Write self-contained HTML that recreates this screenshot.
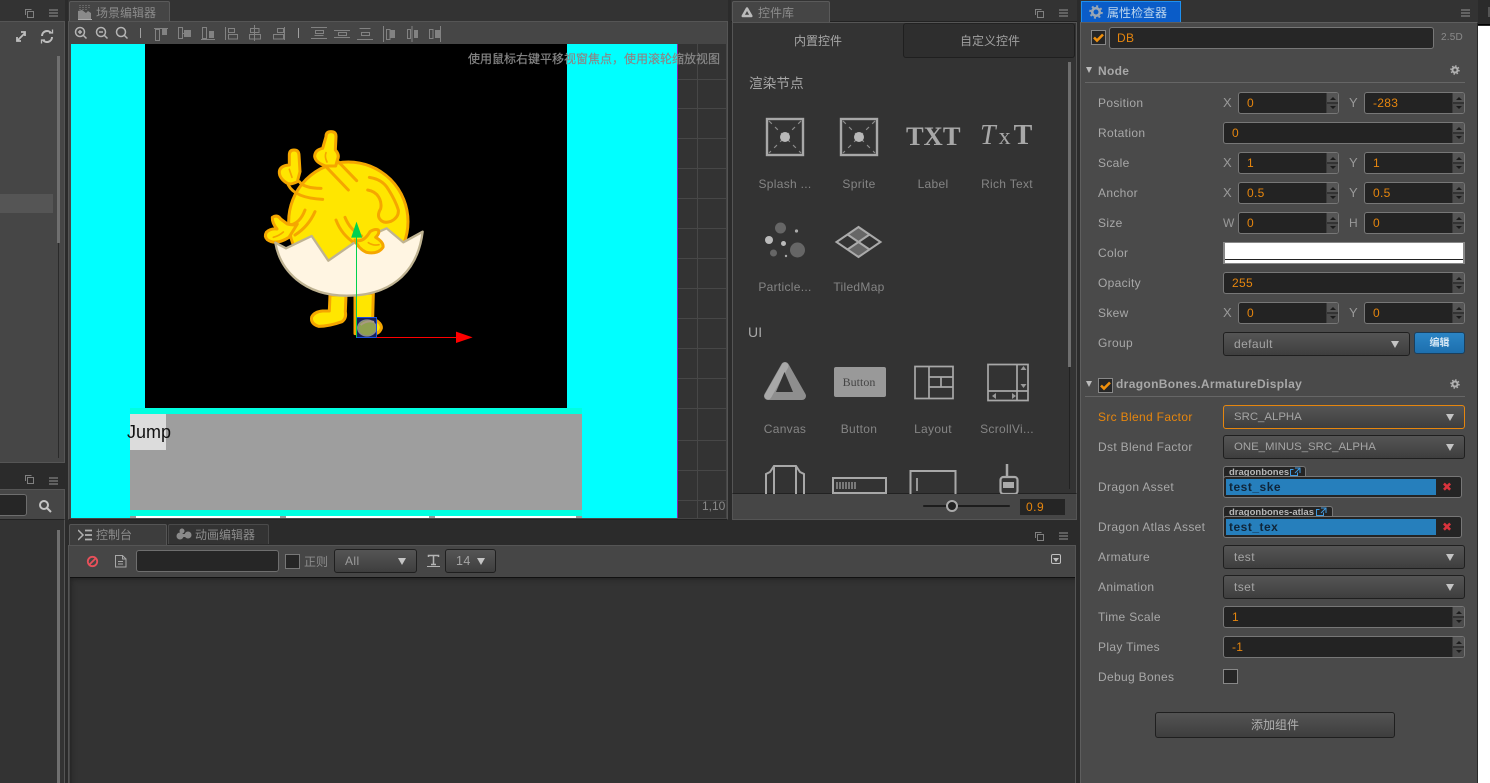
<!DOCTYPE html>
<html><head><meta charset="utf-8"><style>
*{box-sizing:border-box}
html,body{margin:0;padding:0}
body{width:1490px;height:783px;overflow:hidden;background:#2b2b2b;position:relative;font:12px/16px "Liberation Sans","Noto Sans CJK SC",sans-serif;color:#a0a0a0}
div,span,svg{position:absolute}
.t{white-space:nowrap;letter-spacing:.4px}
.c{text-align:center;letter-spacing:.3px;white-space:nowrap;color:#858585;width:90px}
.l{left:17px;white-space:nowrap;letter-spacing:.33px;color:#a8a8a8;line-height:16px}
.ax{white-space:nowrap;color:#999;font-size:13px;line-height:16px}
.in{height:22px;background:#232323;border:1px solid #777;border-radius:3px;color:#e6860e;line-height:20px;padding-left:8px;letter-spacing:.3px;overflow:hidden}
.in b{position:absolute;right:0;top:0;bottom:0;width:12px;background:linear-gradient(#555 0,#555 9px,#333 9px,#333 11px,#4b4b4b 11px);border-left:1px solid #3a3a3a}
.in b:before,.in b:after{content:"";position:absolute;left:3px;border-left:3px solid transparent;border-right:3px solid transparent}
.in b:before{top:4px;border-bottom:3.5px solid #1c1c1c}
.in b:after{top:13px;border-top:3.5px solid #1c1c1c}
.sel{height:24px;background:linear-gradient(#555,#3e3e3e);border:1px solid #1f1f1f;border-radius:3px;color:#a4a4a4;line-height:22px;padding-left:10px;letter-spacing:.4px}
.sel:after{content:"";position:absolute;right:10px;top:8px;border-left:4.5px solid transparent;border-right:4.5px solid transparent;border-top:7px solid #c4c4c4}
.asset{left:142px;height:22px;width:239px;background:#242424;border:1px solid #777;border-radius:3px}
.asset i{position:absolute;left:2px;top:2px;height:16px;width:210px;background:#267fbc;color:#10263a;font:bold 12px/17px "Liberation Sans",sans-serif;font-style:normal;letter-spacing:.5px;padding-left:3px}
.asset u{position:absolute;left:218px;top:1px;color:#d8333c;font:bold 12px/18px "DejaVu Sans",sans-serif;text-decoration:none}
.tag{left:142px;height:12px;background:#242424;border:1px solid #777;border-bottom:0;border-radius:3px 3px 0 0;color:#b8b8b8;font:bold 9.5px/11px "Liberation Sans",sans-serif;padding-left:5px;white-space:nowrap}
.tag svg{top:0}
</style></head><body>

<!-- left panels -->
<div style="left:0;top:0;width:65px;height:21px;background:#333"></div>
<div style="left:0;top:21px;width:65px;height:442px;background:#464646;border-right:1px solid #555;border-top:1px solid #555;border-bottom:1px solid #555"></div>
<div style="left:0;top:194px;width:53px;height:19px;background:#555"></div>
<div style="left:57px;top:56px;width:3px;height:187px;background:#6f6f6f"></div>
<div style="left:58px;top:243px;width:1px;height:215px;background:#2a2a2a"></div>
<svg style="left:0;top:0" width="65" height="530" fill="none" stroke="#808080">
<rect x="27.500" y="11.500" width="6" height="6"/><path d="M25.500 15V9.500h6"/><path d="M49 10h9M49 13h9M49 16h9" stroke-width="1.300"/>
<path d="M17 41l8-8M17 37v4h4M21 32h4v4" stroke="#bdbdbd" stroke-width="1.800"/>
<path d="M42 36a5 5 0 0 1 9-3M52 37a5 5 0 0 1-9 3" stroke="#bdbdbd" stroke-width="2"/><path d="M49 33h3.500v-3.500M45 40h-3.500v3.500" stroke="#bdbdbd" stroke-width="1.300"/>
<rect x="27.500" y="477.500" width="6" height="6"/><path d="M25.500 481v-5.500h6"/><path d="M49 478h9M49 481h9M49 484h9" stroke-width="1.300"/>
</svg>
<div style="left:0;top:489px;width:65px;height:30px;background:#464646;border-top:1px solid #555;border-right:1px solid #555"></div>
<div style="left:-4px;top:494px;width:31px;height:22px;background:#262626;border:1px solid #6e6e6e;border-radius:3px"></div>
<svg style="left:38px;top:499px" width="14" height="14" fill="none" stroke="#c4c4c4" stroke-width="2"><circle cx="6" cy="6" r="4"/><path d="M9 9l4 4"/></svg>
<div style="left:0;top:519px;width:65px;height:264px;background:#333;border-right:1px solid #555;border-top:1px solid #222"></div>
<div style="left:57px;top:530px;width:3px;height:253px;background:#6f6f6f"></div>

<!-- scene panel -->
<div style="left:68px;top:0;width:660px;height:22px;background:#333;border-bottom:1px solid #222"></div>
<div style="left:69px;top:1px;width:101px;height:21px;background:#454545;border:1px solid #5a5a5a;border-bottom:0;border-radius:2px 2px 0 0"></div>
<svg style="left:78px;top:4px" width="15" height="16"><path d="M0 7l4-1 4 3 2-2 3 2v6H0z" fill="#8a8a8a"/><path d="M0 15.500h14" stroke="#aaa"/><path d="M1 1.500h12M1 3.500h12M1 5.500h8" stroke="#666" stroke-dasharray="2 1"/></svg>
<div class="t" style="left:96px;top:5px;color:#8c8c8c;letter-spacing:0">场景编辑器</div>
<div style="left:68px;top:21px;width:660px;height:499px;background:#464646;border:1px solid #555;border-bottom-color:#222"></div>
<svg style="left:70px;top:22px" width="400" height="22" fill="none" stroke="#828282">
<g stroke="#b4b4b4" stroke-width="1.500"><circle cx="10" cy="10" r="4.500"/><path d="M13.500 13.500l3 3M8 10h4M10 8v4"/><circle cx="31" cy="10" r="4.500"/><path d="M34.500 13.500l3 3M29 10h4"/><circle cx="51" cy="10" r="4.500"/><path d="M54.500 13.500l3 3"/></g>
<path d="M70.500 6v10M228.500 6v10" stroke="#a0a0a0"/>
<path d="M84 6.500h14M85.500 7.500h4v11h-4z"/><rect x="92" y="7" width="5" height="6" fill="#828282" stroke="none"/>
<path d="M108.500 5.500h4v11h-4zM112.500 11.500h2"/><rect x="114" y="8" width="7" height="7" fill="#828282" stroke="none"/>
<path d="M131 17.500h14M132.500 5.500h4v11h-4z"/><rect x="139" y="9" width="5" height="7" fill="#828282" stroke="none"/>
<path d="M155.500 5v13M158.500 6.500h6v4h-6zM158.500 12.500h9v4.500h-9z"/>
<path d="M184.500 3v16M180.500 6.500h8.500v4h-8.500zM179.500 12.500h11v4.500h-11z"/>
<path d="M214.500 5v13M207.500 6.500h6v4h-6zM203.500 12.500h10v4.500h-10z"/>
<path d="M241 5.500h16M245.500 8.500h8v3h-8zM241 16.500h16M244.500 13.500h9"/>
<path d="M264 8.500h16M264 15.500h16M268.500 10.500h8v3h-8z"/>
<path d="M287 17.500h16M289.500 6.500h11M291.500 10.500h8v3h-8z"/>
<path d="M313.500 4v16M316.500 7.500h3.500v10h-3.500z"/><rect x="320" y="8" width="5" height="8" fill="#828282" stroke="none"/>
<path d="M342 4v16M337.500 7.500h3v9h-3z"/><rect x="344" y="8" width="4" height="8" fill="#828282" stroke="none"/>
<path d="M370.500 4v16M359.500 7.500h3.500v9h-3.500z"/><rect x="365" y="8" width="5" height="8" fill="#828282" stroke="none"/>
</svg>

<!-- viewport -->
<div style="left:71px;top:44px;width:655px;height:474px;background:#333;overflow:hidden">
<svg style="left:607px;top:0" width="48" height="474" stroke="#474747"><path d="M19.500 0v474"/><path d="M0 35.500h48M0 64.500h48M0 94.500h48M0 124.500h48M0 154.500h48M0 184.500h48M0 214.500h48M0 244.500h48M0 274.500h48M0 304.500h48M0 334.500h48M0 364.500h48M0 396.500h48M0 426.500h48M0 456.500h48"/></svg>
<div style="left:0;top:0;width:606px;height:474px;background:#0ff"></div>
<div style="left:606px;top:0;width:1px;height:474px;background:#8a1fb0"></div>
<div style="left:74px;top:0;width:422px;height:364px;background:#000"></div>
<div style="left:59px;top:364px;width:452px;height:108px;background:#00ffe0"></div>
<div style="left:59px;top:370px;width:452px;height:96px;background:#9e9e9e"></div>
<div style="left:59px;top:370px;width:36px;height:36px;background:#dcdcdc"></div>
<div style="left:59px;top:472px;width:452px;height:2px;background:#fff"></div>
<div style="left:59px;top:472px;width:6px;height:2px;background:#999"></div>
<div style="left:209px;top:472px;width:6px;height:2px;background:#999"></div>
<div style="left:358px;top:472px;width:6px;height:2px;background:#999"></div>
<div style="left:505px;top:472px;width:6px;height:2px;background:#999"></div>
<div style="left:56px;top:378px;color:#111;font:18px/20px 'Liberation Sans',sans-serif">Jump</div>
<div class="t" style="left:631px;top:454px;color:#8a8a8a;letter-spacing:0">1,10</div>
</div>
<div style="left:468px;top:51px;width:253px;white-space:nowrap;color:#888;font-size:12px;line-height:16px;-webkit-text-stroke:.2px #888">使用鼠标右键平移视窗焦点&#65292;使用滚轮缩放视图</div>

<!-- chick -->
<svg style="left:240px;top:110px" width="250" height="240" viewBox="0 0 750 720">
<g stroke="#f5a600" stroke-width="9" stroke-linejoin="round" stroke-linecap="round">
<path d="M270 555h48l-2 50q4 20-10 30q-40 14-70 14q-25-8-21-28q8-16 33-18h20z" fill="#ffe600"/>
<path d="M345 550h55l-2 75q28 14 26 30q-6 16-20 16h-59z" fill="#ffe600"/>
<circle cx="325" cy="335" r="179" fill="#ffe600"/>
<g fill="none" stroke-width="9">
<path d="M388 202q40 6 57 36q22 35 30 62q2 22-22 34q-22 8-33-6-10-12 2-32 4-18-6-35-10-17-33-21"/>
<path d="M258 170L325 240M295 155L350 212"/>
<path d="M145 225Q165 264 248 268M178 215q15 20 65 20"/>
<path d="M150 345Q180 340 195 300M165 375Q205 350 225 305"/>
<path d="M288 330Q305 375 345 400M315 322Q330 360 365 378"/>
</g>
<path d="M258 80q0-15 15-15q15 0 15 15l-2 40q14 15 6 30l-5 18h-30q-30-10-33-28q0-20 24-25z" fill="#ffe600"/>
<path d="M148 135q0-15 14-15q14 0 15 15l3 50l-8 30q-20 10-30 5q-25-15-24-35q2-18 30-20z" fill="#ffe600"/>
<path d="M97 322q15-10 25 5l20 15q20 5 30 0l-25 40q-40 25-65 7q-10-10-3-22q12-12 32-10q-15-18-14-35z" fill="#ffe600"/>
<g fill="none" stroke-width="5"><path d="M258 128q-5 12 3 28M148 178l8 24M100 382q18-5 30-16"/></g>
</g>
<path d="M548 365C535 470 470 557 320 557C190 557 120 480 106 398L138 415 215 378 265 452 340 400 440 355 490 397Z" fill="#fff5e2" stroke="#bfb392" stroke-width="7" stroke-linejoin="round"/>
<g stroke="#f5a600" stroke-width="9" stroke-linejoin="round" stroke-linecap="round">
<path d="M345 390q25 10 45-25q15-10 25-5q5 10-8 22q25 15 22 30q-15 22-50 15q-25-12-34-37z" fill="#ffe600"/>
<path d="M385 398q15 10 32 6" fill="none" stroke-width="5"/>
</g>
<rect x="349.500" y="622.500" width="60" height="60" fill="#14205a"/>
<ellipse cx="381" cy="654" rx="28" ry="24" fill="#8fa050" stroke="#8a8a8a" stroke-width="4"/>
<path d="M362 645q18-15 40-9" stroke="#a89a80" stroke-width="6" fill="none"/>
<rect x="349.500" y="622.500" width="60" height="60" fill="none" stroke="#1c50e0" stroke-width="3"/>
<path d="M349.500 382v300" stroke="#00d24f" stroke-width="3"/>
<path d="M349.500 335l-16 48h33z" fill="#00d24f"/>
<path d="M410 682.500h240" stroke="#ff0000" stroke-width="3"/>
<path d="M648 665v34l50-17z" fill="#f00"/>
</svg>

<!-- library panel -->
<div style="left:731px;top:0;width:346px;height:22px;background:#333;border-bottom:1px solid #222"></div>
<div style="left:732px;top:1px;width:98px;height:21px;background:#454545;border:1px solid #5a5a5a;border-bottom:0;border-radius:2px 2px 0 0"></div>
<svg style="left:741px;top:6px" width="13" height="12" fill="none" stroke="#bbb" stroke-width="2.500"><path d="M6 2.500L1.800 10h8.500z" stroke-linejoin="round"/></svg>
<div class="t" style="left:758px;top:5px;color:#8c8c8c;letter-spacing:0">控件库</div>
<svg style="left:1030px;top:0" width="48" height="22" fill="none" stroke="#808080"><rect x="7.500" y="11.500" width="6" height="6"/><path d="M5.500 15V9.500h6"/><path d="M29 10h9M29 13h9M29 16h9" stroke-width="1.300"/></svg>
<div style="left:732px;top:22px;width:345px;height:472px;background:#333;border:1px solid #555;border-bottom:1px solid #222"></div>
<div style="left:903px;top:23px;width:172px;height:35px;background:#2e2e2e;border:1px solid #1f1f1f;border-top:1px solid #222;border-radius:3px"></div>
<div class="t" style="left:794px;top:33px;color:#a8a8a8;letter-spacing:0">内置控件</div>
<div class="t" style="left:960px;top:33px;color:#a0a0a0;letter-spacing:0">自定义控件</div>
<div class="t" style="left:749px;top:76px;color:#a8a8a8;font-size:13.500px;letter-spacing:.2px">渲染节点</div>
<div class="t" style="left:748px;top:324px;color:#a8a8a8;font-size:14px;letter-spacing:.2px">UI</div>
<div style="left:1068px;top:62px;width:3px;height:305px;background:#6f6f6f"></div>
<div style="left:1069px;top:367px;width:1px;height:122px;background:#222"></div>

<svg style="left:740px;top:100px" width="320" height="394" fill="none">
<path d="M29 21L61 53M61 21L29 53M103 21L135 53M135 21L103 53" stroke="#8c8c8c" stroke-dasharray="4 4.500" stroke-width="1.200"/>
<rect x="27" y="19" width="36" height="36" stroke="#a8a8a8" stroke-width="2.400"/>
<rect x="101" y="19" width="36" height="36" stroke="#a8a8a8" stroke-width="2.400"/>
<circle cx="45" cy="37" r="5" fill="#b8b8b8"/><circle cx="119" cy="37" r="5" fill="#b8b8b8"/>
<circle cx="40.500" cy="128" r="5.500" fill="#666"/><circle cx="29" cy="140" r="4" fill="#bbb"/><circle cx="43.500" cy="143.500" r="2.500" fill="#bbb"/><circle cx="56.500" cy="131" r="1.600" fill="#aaa"/><circle cx="57.500" cy="150" r="7.500" fill="#666"/><circle cx="33.500" cy="153" r="3.500" fill="#666"/><circle cx="46" cy="156" r="1.200" fill="#aaa"/>
<path d="M118.500 127l11 7.500-11 7.500-11-7.500zM118.500 142l11 7.500-11 7.500-11-7.500z" fill="#666"/>
<path d="M118.500 127l22 15-22 15-22-15zM107.500 134.500l22 15M129.500 134.500l-22 15" stroke="#aaa" stroke-width="2"/>
<path d="M45 266L28 296H62Z" fill="#8e8e8e" stroke="#8e8e8e" stroke-width="8" stroke-linejoin="round"/>
<path d="M45 266L28 296" stroke="#a8a8a8" stroke-width="7" stroke-linecap="round"/>
<path d="M44.500 272L36 292H53Z" fill="#333"/>
<rect x="94" y="267" width="52" height="30" rx="2" fill="#999"/>
<g stroke="#a8a8a8" stroke-width="1.700">
<path d="M175 266.500h38v32h-38zM189 266.500v32M189 277h24M189 287h24M201 277v10"/>
<path d="M248 264.500h40v36h-40zM277 264.500v36M248 291h40"/>
<path d="M26 394V374l4-2 4-6h22l4 6 4 2v20M34 366v28M56 366v28" stroke-width="2"/>
<path d="M93 378h53v15H93z" stroke-width="2"/>
<path d="M97 382v7M100 382v7M103 382v7M106 382v7M109 382v7M112 382v7M115 382v7" stroke-width="1.200"/>
<path d="M170.500 394v-23h45v23" stroke-width="2"/><path d="M177 378v13"/>
<path d="M267 364v14" stroke-width="2.500"/><rect x="260.500" y="377" width="17" height="17" rx="3" stroke-width="2.200"/>
</g>
<rect x="263" y="382" width="11" height="6" fill="#aaa"/>
</svg>
<svg style="left:1020px;top:364px" width="8" height="28" fill="#999"><path d="M.5 6l3-4 3 4zM.5 20l3 4 3-4z"/></svg>
<svg style="left:988px;top:390px" width="30" height="12" fill="#999"><path d="M8 3l-4 3 4 3zM24 3l4 3-4 3z"/></svg>

<div style="left:823px;top:374px;font:12px/16px 'Liberation Serif',serif;color:#444;width:72px;text-align:center">Button</div>
<div style="left:906px;top:122px;font:bold 26.500px/28px 'Liberation Serif',serif;color:#a8a8a8;white-space:nowrap">TXT</div>
<div style="left:980px;top:122px;font:28px/28px 'Liberation Serif',serif;color:#a8a8a8;white-space:nowrap;letter-spacing:3px"><em>T</em><span style="position:static;font-size:24px">x</span><b>T</b></div>

<div class="c" style="left:740px;top:176px">Splash ...</div>
<div class="c" style="left:814px;top:176px">Sprite</div>
<div class="c" style="left:888px;top:176px">Label</div>
<div class="c" style="left:962px;top:176px">Rich Text</div>
<div class="c" style="left:740px;top:279px">Particle...</div>
<div class="c" style="left:814px;top:279px">TiledMap</div>
<div class="c" style="left:740px;top:421px">Canvas</div>
<div class="c" style="left:814px;top:421px">Button</div>
<div class="c" style="left:888px;top:421px">Layout</div>
<div class="c" style="left:962px;top:421px">ScrollVi...</div>

<div style="left:732px;top:494px;width:345px;height:26px;background:#464646;border:1px solid #555;border-top:0"></div>
<div style="left:923px;top:505px;width:87px;height:2px;background:#1d1d1d;border-radius:1px"></div>
<div style="left:946px;top:500px;width:12px;height:12px;border-radius:50%;background:#222;border:2px solid #aaa"></div>
<div style="left:1020px;top:499px;width:45px;height:16px;background:#252525;color:#e6860e;line-height:16px;padding-left:6px;letter-spacing:.5px">0.9</div>

<!-- console -->
<div style="left:69px;top:524px;width:98px;height:21px;background:#3d3d3d;border:1px solid #555;border-bottom:0;border-radius:2px 2px 0 0"></div>
<div style="left:168px;top:524px;width:101px;height:20px;background:#333;border:1px solid #4a4a4a;border-bottom:0;border-radius:2px 2px 0 0"></div>
<svg style="left:78px;top:529px" width="15" height="12" fill="none" stroke="#b0b0b0" stroke-width="1.500"><path d="M0 1l5 5-5 5"/><path d="M7 1.500h7M7 6h7M7 10.500h7" stroke-width="1.700"/></svg>
<svg style="left:176px;top:528px" width="16" height="13" fill="#8a8a8a"><circle cx="4" cy="8" r="3.500"/><circle cx="12" cy="7" r="3.500"/><circle cx="6" cy="3" r="2.500"/><path d="M4 6h8v3H4z"/></svg>
<div class="t" style="left:96px;top:527px;color:#8c8c8c;letter-spacing:0">控制台</div>
<div class="t" style="left:195px;top:527px;color:#8c8c8c;letter-spacing:0">动画编辑器</div>
<svg style="left:1030px;top:525px" width="48" height="22" fill="none" stroke="#808080"><rect x="7.500" y="9.500" width="6" height="6"/><path d="M5.500 13V7.500h6"/><path d="M29 8h9M29 11h9M29 14h9" stroke-width="1.300"/></svg>
<div style="left:68px;top:545px;width:1008px;height:238px;background:#464646;border:1px solid #555;border-bottom:0"></div>
<div style="left:70px;top:577px;width:1005px;height:206px;background:#333;border-top:1px solid #111;box-shadow:inset 4px 4px 6px -3px #222"></div>
<svg style="left:86px;top:555px" width="13" height="13" fill="none" stroke="#e8505a" stroke-width="1.800"><circle cx="6.500" cy="6.500" r="4.700"/><path d="M3 10l7-7"/></svg>
<svg style="left:115px;top:555px" width="12" height="13" fill="none" stroke="#a8a8a8"><path d="M.5.500h7l3.500 3.500v8H.500zM7.500.500v3.500H11"/><path d="M3 6.500h5M3 9h5"/></svg>
<div style="left:136px;top:550px;width:143px;height:22px;background:#262626;border:1px solid #6e6e6e;border-radius:3px"></div>
<div style="left:285px;top:554px;width:15px;height:15px;background:#262626;border:1px solid #777"></div>
<div class="t" style="left:304px;top:554px;color:#8c8c8c;letter-spacing:0">正则</div>
<div class="sel" style="left:334px;top:549px;width:83px;color:#9c9c9c">All</div>
<svg style="left:427px;top:554px" width="13" height="14" fill="none" stroke="#b4b4b4"><path d="M1.500 3V1.500h10V3M6.500 1.500v9M4 10.500h5" stroke-width="1.500"/><path d="M0 12.500h13"/></svg>
<div class="sel" style="left:445px;top:549px;width:51px;font-size:12.500px">14</div>
<div style="left:1051px;top:554px;width:10px;height:10px;border:1px solid #c0c0c0;border-radius:2px"></div>
<div style="left:1053px;top:558px;border-left:3px solid transparent;border-right:3px solid transparent;border-top:4px solid #c0c0c0"></div>

<!-- inspector -->
<div style="left:1080px;top:0;width:400px;height:22px;background:#333"></div>
<div style="left:1478px;top:0;width:12px;height:25px;background:#2b2b2b;border-bottom:1px solid #000"></div>
<div style="left:1478px;top:26px;width:12px;height:757px;background:#fff"></div>
<div style="left:1488px;top:7px;width:2px;height:10px;background:#555"></div>
<div style="left:1081px;top:1px;width:100px;height:21px;background:#0a5cc8;border:1px solid #1e90f0;border-bottom:0"></div>
<svg style="left:1089px;top:5px" width="14" height="14" fill="none" stroke="#9aa6b4"><circle cx="7" cy="7" r="3.800" stroke-width="2.600"/><circle cx="7" cy="7" r="5.800" stroke-width="2" stroke-dasharray="2 2.550"/></svg>
<div class="t" style="left:1107px;top:5px;color:#bcd6ee;letter-spacing:0">属性检查器</div>
<svg style="left:1460px;top:0" width="16" height="22" fill="none" stroke="#808080" stroke-width="1.300"><path d="M1 10h9M1 13h9M1 16h9"/></svg>

<div style="left:1080px;top:22px;width:398px;height:761px;background:#4a4a4a;border:1px solid #5e5e5e;border-right:1px solid #2a2a2a;border-bottom:0">
<!-- inner coords: origin 1081,23 -->
<div style="left:10px;top:7px;width:15px;height:15px;background:#262626;border:1px solid #888"></div>
<svg style="left:11px;top:8px" width="13" height="13" fill="none" stroke="#f0900c" stroke-width="2.600"><path d="M2 6.500l3 3 6-6"/></svg>
<div style="left:28px;top:4px;width:325px;height:22px;background:#262626;border:1px solid #777;border-radius:3px;color:#e6860e;line-height:20px;padding-left:7px;letter-spacing:.3px">DB</div>
<div class="t" style="left:360px;top:7px;color:#8a8a8a;font-size:10px;letter-spacing:.2px">2.5D</div>

<div style="left:5px;top:44px;border-left:3.500px solid transparent;border-right:3.500px solid transparent;border-top:6px solid #bbb"></div>
<div class="t" style="left:17px;top:40px;font-weight:bold;color:#a8a8a8;letter-spacing:.3px">Node</div>
<svg style="left:369px;top:42px" width="10" height="10" fill="none" stroke="#b0b0b0"><circle cx="5" cy="5" r="2.500" stroke-width="2"/><circle cx="5" cy="5" r="4" stroke-width="1.500" stroke-dasharray="1.500 1.640"/></svg>
<div style="left:4px;top:59px;width:380px;height:1px;background:#666"></div>

<div class="l" style="top:72px">Position</div><div class="ax" style="left:142px;top:72px">X</div><div class="in" style="left:157px;top:69px;width:101px">0<b></b></div><div class="ax" style="left:268px;top:72px">Y</div><div class="in" style="left:283px;top:69px;width:101px">-283<b></b></div>
<div class="l" style="top:102px">Rotation</div><div class="in" style="left:142px;top:99px;width:242px">0<b></b></div>
<div class="l" style="top:132px">Scale</div><div class="ax" style="left:142px;top:132px">X</div><div class="in" style="left:157px;top:129px;width:101px">1<b></b></div><div class="ax" style="left:268px;top:132px">Y</div><div class="in" style="left:283px;top:129px;width:101px">1<b></b></div>
<div class="l" style="top:162px">Anchor</div><div class="ax" style="left:142px;top:162px">X</div><div class="in" style="left:157px;top:159px;width:101px">0.5<b></b></div><div class="ax" style="left:268px;top:162px">Y</div><div class="in" style="left:283px;top:159px;width:101px">0.5<b></b></div>
<div class="l" style="top:192px">Size</div><div class="ax" style="left:142px;top:192px;font-size:12px">W</div><div class="in" style="left:157px;top:189px;width:101px">0<b></b></div><div class="ax" style="left:268px;top:192px;font-size:12px">H</div><div class="in" style="left:283px;top:189px;width:101px">0<b></b></div>
<div class="l" style="top:222px">Color</div>
<div style="left:142px;top:219px;width:242px;height:22px;background:#fff;border:1px solid #888;border-width:1px 2px"></div>
<div style="left:144px;top:236px;width:238px;height:1px;background:#222"></div>
<div class="l" style="top:252px">Opacity</div><div class="in" style="left:142px;top:249px;width:242px">255<b></b></div>
<div class="l" style="top:282px">Skew</div><div class="ax" style="left:142px;top:282px">X</div><div class="in" style="left:157px;top:279px;width:101px">0<b></b></div><div class="ax" style="left:268px;top:282px">Y</div><div class="in" style="left:283px;top:279px;width:101px">0<b></b></div>
<div class="l" style="top:312px">Group</div><div class="sel" style="left:142px;top:309px;width:187px">default</div>
<div style="left:333px;top:309px;width:51px;height:22px;background:linear-gradient(#2b85c5,#1d6fae);border:1px solid #1b3f5c;border-radius:3px;color:#d4e6f4;text-align:center;font-size:10px;line-height:21px;font-weight:bold">编辑</div>

<div style="left:5px;top:358px;border-left:3.500px solid transparent;border-right:3.500px solid transparent;border-top:6px solid #bbb"></div>
<div style="left:17px;top:355px;width:15px;height:15px;background:#262626;border:1px solid #888"></div>
<svg style="left:18px;top:356px" width="13" height="13" fill="none" stroke="#f0900c" stroke-width="2.600"><path d="M2 6.500l3 3 6-6"/></svg>
<div class="t" style="left:35px;top:353px;font-weight:bold;color:#a8a8a8;letter-spacing:.35px">dragonBones.ArmatureDisplay</div>
<svg style="left:369px;top:356px" width="10" height="10" fill="none" stroke="#b0b0b0"><circle cx="5" cy="5" r="2.500" stroke-width="2"/><circle cx="5" cy="5" r="4" stroke-width="1.500" stroke-dasharray="1.500 1.640"/></svg>
<div style="left:4px;top:373px;width:380px;height:1px;background:#666"></div>

<div class="l" style="top:386px;color:#e6860e">Src Blend Factor</div><div class="sel" style="left:142px;top:382px;width:242px;border-color:#e6860e;font-size:11.400px;letter-spacing:0">SRC_ALPHA</div>
<div class="l" style="top:416px">Dst Blend Factor</div><div class="sel" style="left:142px;top:412px;width:242px;font-size:11.400px;letter-spacing:0">ONE_MINUS_SRC_ALPHA</div>

<div class="tag" style="top:443px;width:83px">dragonbones<svg style="left:66px" width="11" height="10" fill="none" stroke="#3f9ae0"><path d="M7.500 5.500v3h-7v-6h3M5 1h5v5M10 1L5 6"/></svg></div>
<div class="l" style="top:456px">Dragon Asset</div>
<div class="asset" style="top:453px"><i>test_ske</i><u>✖</u></div>
<div class="tag" style="top:483px;width:110px">dragonbones-atlas<svg style="left:92px" width="11" height="10" fill="none" stroke="#3f9ae0"><path d="M7.500 5.500v3h-7v-6h3M5 1h5v5M10 1L5 6"/></svg></div>
<div class="l" style="top:496px">Dragon Atlas Asset</div>
<div class="asset" style="top:493px"><i>test_tex</i><u>✖</u></div>

<div class="l" style="top:526px">Armature</div><div class="sel" style="left:142px;top:522px;width:242px">test</div>
<div class="l" style="top:556px">Animation</div><div class="sel" style="left:142px;top:552px;width:242px">tset</div>
<div class="l" style="top:586px">Time Scale</div><div class="in" style="left:142px;top:583px;width:242px">1<b></b></div>
<div class="l" style="top:616px">Play Times</div><div class="in" style="left:142px;top:613px;width:242px">-1<b></b></div>
<div class="l" style="top:646px">Debug Bones</div><div style="left:142px;top:646px;width:15px;height:15px;background:#262626;border:1px solid #888"></div>
<div style="left:74px;top:689px;width:240px;height:26px;background:linear-gradient(#535353,#3e3e3e);border:1px solid #1f1f1f;border-radius:3px;color:#b0b0b0;text-align:center;line-height:24px">添加组件</div>
</div>

</body></html>
